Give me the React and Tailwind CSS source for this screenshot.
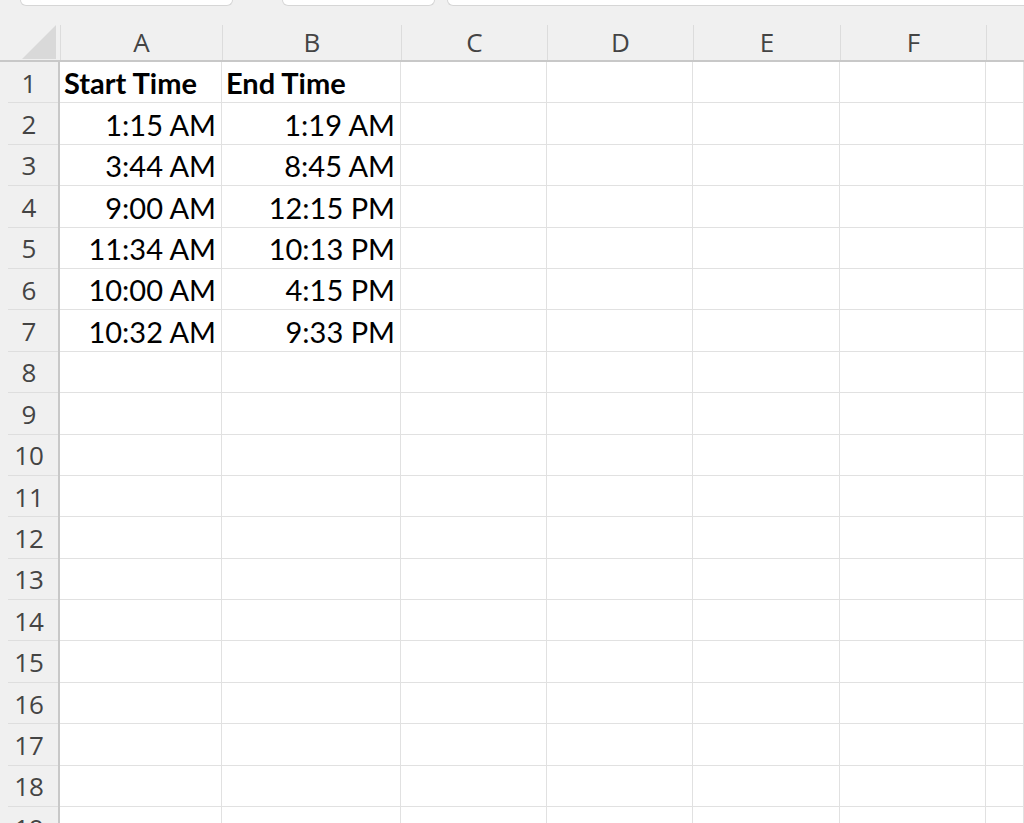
const cols = ["A", "B", "C", "D", "E", "F", ""];
const widths = ["w-[162px]", "w-[179px]", "w-[146px]", "w-[146px]", "w-[147px]", "w-[146px]", "flex-1"];

const data = [
  ["Start Time", "End Time"],
  ["1:15 AM", "1:19 AM"],
  ["3:44 AM", "8:45 AM"],
  ["9:00 AM", "12:15 PM"],
  ["11:34 AM", "10:13 PM"],
  ["10:00 AM", "4:15 PM"],
  ["10:32 AM", "9:33 PM"],
];

const rows = Array.from({ length: 19 }, (_, i) => i + 1);

export default function App() {
  return (
    <div className="w-[1024px] h-[823px] overflow-hidden bg-[#f0f0f0] font-['Open_Sans',sans-serif]">
      {/* tab strip */}
      <div className="h-[22px] flex items-start">
        <div className="ml-[20px] w-[213px] h-[6px] bg-white border border-t-0 border-[#d6d6d6] rounded-b-[6px]" />
        <div className="ml-[49px] w-[153px] h-[6px] bg-white border border-t-0 border-[#d6d6d6] rounded-b-[6px]" />
        <div className="ml-[12px] flex-1 h-[6px] bg-white border border-t-0 border-r-0 border-[#d6d6d6] rounded-bl-[6px]" />
      </div>

      {/* column headers */}
      <div className="flex h-[40px] border-b-2 border-[#c8c8c8]">
        <div className="w-[60px] shrink-0 relative">
          <svg className="absolute left-[22px] top-[3px]" width="34" height="34" viewBox="0 0 34 34">
            <polygon points="34,0 34,34 0,34" fill="#d9d9d9" />
          </svg>
        </div>
        {cols.map((c, i) => (
          <div
            key={i}
            className={`${widths[i]} shrink-0 flex items-center justify-center text-[26px] text-[#444] border-l border-[#dcdcdc] mt-[3px]`}
          >
            {c}
          </div>
        ))}
      </div>

      {/* rows */}
      {rows.map((r) => (
        <div key={r} className="flex h-[41.4px] bg-white">
          <div className="w-[60px] shrink-0 bg-[#f0f0f0] border-r-2 border-[#c8c8c8] flex items-center justify-center text-[26px] text-[#444] relative">
            <span className="leading-none">{r}</span>
            <div className="absolute left-[8px] right-0 bottom-0 h-px bg-[#dedede]" />
          </div>
          {cols.map((c, i) => {
            const v = data[r - 1]?.[i];
            const head = r === 1;
            return (
              <div
                key={i}
                className={`${widths[i]} shrink-0 border-r border-b border-[#e1e1e1] flex items-center pt-[2px] ${
                  head ? "justify-start pl-[4px]" : "justify-end pr-[5px]"
                } font-['Lato',sans-serif] text-[29px] text-black whitespace-nowrap ${head ? "font-bold" : ""}`}
              >
                {v}
              </div>
            );
          })}
        </div>
      ))}
    </div>
  );
}
